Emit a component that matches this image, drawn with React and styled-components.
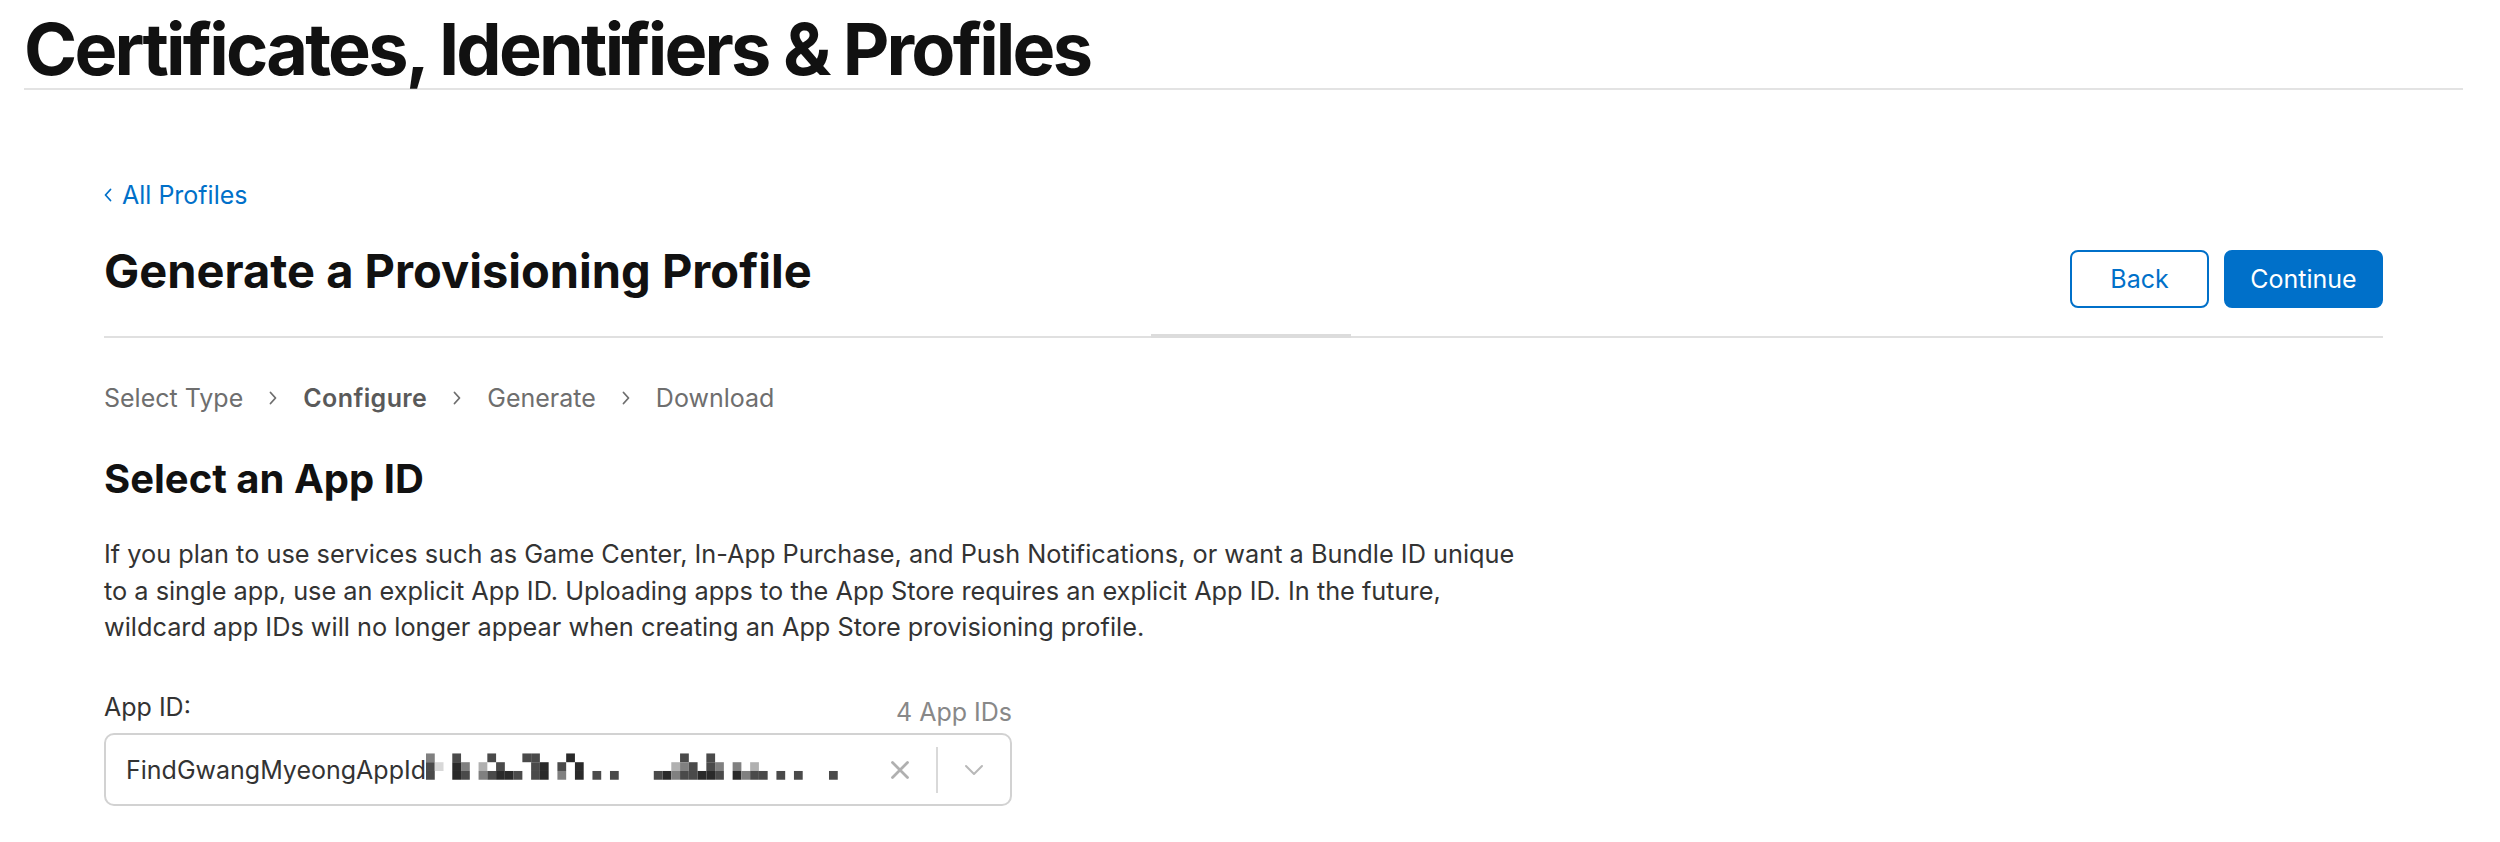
import React from 'react'
import styled, { createGlobalStyle } from 'styled-components'

const GlobalStyle = createGlobalStyle`
  body {
    margin: 0;
    background: #fff;
    font-family: Inter, "Noto Sans", sans-serif;
    color: #1d1d1f;
  }
`

const Page = styled.div`
  padding: 0 37px 0 24px;
`

const TopBar = styled.header`
  padding-top: 13px;
  padding-bottom: 3px;
  border-bottom: 2px solid #e3e3e3;
`

const SiteTitle = styled.h1`
  margin: 0;
  font-size: 72px;
  line-height: 72px;
  font-weight: 700;
  letter-spacing: -2.8px;
  color: #111;
`

const Main = styled.main`
  padding: 87px 80px 0;
`

const BackLink = styled.a`
  display: inline-flex;
  align-items: center;
  gap: 10px;
  font-size: 25px;
  line-height: 36px;
  color: #0070c9;
  text-decoration: none;
`

const HeaderRow = styled.div`
  position: relative;
  display: flex;
  justify-content: space-between;
  align-items: flex-start;
  margin-top: 31px;
  padding-bottom: 28px;
  border-bottom: 2px solid #e0e0e0;
`

const TabMark = styled.span`
  position: absolute;
  left: calc(50% - 93px);
  bottom: -2px;
  width: 200px;
  height: 4px;
  background: #dcdcdc;
`

const PageTitle = styled.h2`
  margin: 0;
  font-size: 47px;
  line-height: 54px;
  font-weight: 700;
  color: #111;
`

const Actions = styled.div`
  display: flex;
  gap: 15px;
  margin-top: 6px;
`

const Button = styled.button`
  height: 58px;
  min-width: ${p => (p.$primary ? '159px' : '139px')};
  padding: 0 24px;
  border-radius: 8px;
  border: 2px solid #0070c9;
  background: ${p => (p.$primary ? '#0070c9' : '#fff')};
  color: ${p => (p.$primary ? '#fff' : '#0070c9')};
  font-family: inherit;
  font-size: 25px;
  cursor: pointer;
`

const Steps = styled.nav`
  display: flex;
  align-items: center;
  gap: 26px;
  margin-top: 42px;
  font-size: 25px;
  line-height: 36px;
  color: #6e6e6e;
`

const Step = styled.span`
  font-weight: ${p => (p.$current ? 600 : 400)};
  letter-spacing: ${p => (p.$current ? '0.4px' : '0')};
  color: ${p => (p.$current ? '#5a5a5a' : '#6e6e6e')};
`

const SectionTitle = styled.h3`
  margin: 39px 0 0;
  font-size: 40px;
  line-height: 48px;
  font-weight: 700;
  color: #111;
`

const Description = styled.p`
  margin: 33px 0 0;
  max-width: 1430px;
  font-size: 25.3px;
  line-height: 36.7px;
  color: #333;
`

const Field = styled.div`
  width: 908px;
  margin-top: 43px;
`

const FieldHead = styled.div`
  display: flex;
  justify-content: space-between;
  align-items: flex-end;
  font-size: 25px;
  line-height: 36px;
`

const Label = styled.label`
  color: #333;
`

const Count = styled.span`
  color: #888;
  transform: translateY(5px);
`

const SelectBox = styled.div`
  display: flex;
  align-items: center;
  height: 73px;
  margin-top: 8px;
  padding-left: 20px;
  box-sizing: border-box;
  border: 2px solid #d2d2d2;
  border-radius: 10px;
  font-size: 25px;
  color: #333;
`

const Value = styled.span`
  display: flex;
  align-items: center;
  flex: 1;
  white-space: nowrap;
  overflow: hidden;
`

const Controls = styled.div`
  display: flex;
  align-items: center;
  height: 100%;
`

const IconCell = styled.span`
  display: flex;
  align-items: center;
  justify-content: center;
  width: 72px;
  height: 100%;
`

const Divider = styled.span`
  width: 2px;
  height: 46px;
  background: #d9d9d9;
`

const Chevron = () => (
  <svg width="8" height="14" viewBox="0 0 8 14">
    <polyline points="1.5,1.5 6.5,7 1.5,12.5" fill="none" stroke="currentColor" strokeWidth="1.8" strokeLinecap="round" strokeLinejoin="round" />
  </svg>
)

const BackChevron = () => (
  <svg width="8" height="14" viewBox="0 0 8 14">
    <polyline points="6.5,1.5 1.5,7 6.5,12.5" fill="none" stroke="#0070c9" strokeWidth="1.8" strokeLinecap="round" strokeLinejoin="round" />
  </svg>
)

// redacted part of the bundle id, drawn as a mosaic
const shades = { 1: '#d8d8d8', 2: '#b0b0b0', 3: '#808080', 4: '#4a4a4a', 5: '#2a2a2a' }
const mosaic = [
  '3  4   4   44   5            4  4                ',
  '41 53 2 4   45 4 5          234 43 3 2           ',
  '4  54 34554 45 3 5 4 4    45344554 5344 4 4   4  '
]

const Mosaic = () => (
  <svg width="450" height="36" viewBox="0 0 450 36">
    {mosaic.map((row, r) =>
      row.split('').map((c, i) =>
        shades[c] ? <rect key={r + '-' + i} x={i * 9} y={1 + r * 9} width="9" height="9" fill={shades[c]} /> : null
      )
    )}
  </svg>
)

const steps = ['Select Type', 'Configure', 'Generate', 'Download']

export default function App() {
  return (
    <Page>
      <GlobalStyle />
      <TopBar>
        <SiteTitle>Certificates, Identifiers &amp; Profiles</SiteTitle>
      </TopBar>
      <Main>
        <BackLink href="#">
          <BackChevron />
          All Profiles
        </BackLink>
        <HeaderRow>
          <PageTitle>Generate a Provisioning Profile</PageTitle>
          <Actions>
            <Button>Back</Button>
            <Button $primary>Continue</Button>
          </Actions>
          <TabMark />
        </HeaderRow>
        <Steps>
          {steps.map((s, i) => (
            <React.Fragment key={s}>
              {i > 0 && <Chevron />}
              <Step $current={s === 'Configure'}>{s}</Step>
            </React.Fragment>
          ))}
        </Steps>
        <SectionTitle>Select an App ID</SectionTitle>
        <Description>
          If you plan to use services such as Game Center, In-App Purchase, and Push Notifications, or want a Bundle ID unique
          to a single app, use an explicit App ID. Uploading apps to the App Store requires an explicit App ID. In the future,
          wildcard app IDs will no longer appear when creating an App Store provisioning profile.
        </Description>
        <Field>
          <FieldHead>
            <Label>App ID:</Label>
            <Count>4 App IDs</Count>
          </FieldHead>
          <SelectBox>
            <Value>
              FindGwangMyeongAppId
              <Mosaic />
            </Value>
            <Controls>
              <IconCell>
                <svg width="20" height="20" viewBox="0 0 20 20">
                  <path d="M2.5 2.5 L17.5 17.5 M17.5 2.5 L2.5 17.5" stroke="#b0b0b0" strokeWidth="2.8" strokeLinecap="round" />
                </svg>
              </IconCell>
              <Divider />
              <IconCell>
                <svg width="20" height="12" viewBox="0 0 20 12">
                  <polyline points="2,2 10,10 18,2" fill="none" stroke="#b8b8b8" strokeWidth="2" strokeLinecap="round" strokeLinejoin="round" />
                </svg>
              </IconCell>
            </Controls>
          </SelectBox>
        </Field>
      </Main>
    </Page>
  )
}
